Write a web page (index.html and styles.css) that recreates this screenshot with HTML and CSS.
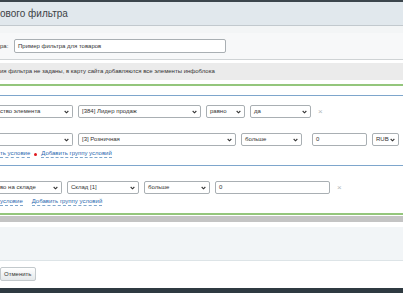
FILE: index.html
```html
<!DOCTYPE html>
<html lang="ru">
<head>
  <meta charset="UTF-8" />
  <title>Добавление нового фильтра</title>
  <link rel="stylesheet" href="styles.css">
</head>
<body>
  <div class="topbar"></div>

  <!-- Заголовок окна -->
  <div class="dlg-title">ового фильтра</div>

  <div class="form-area">
    <div class="form-row">
      <span class="form-label">ра:</span>
      <div class="field field-name">Пример фильтра для товаров</div>
    </div>
  </div>

  <div class="note">ия фильтра не заданы, в карту сайта добавляются все элементы инфоблока</div>

  <!-- Дерево условий -->
  <div class="cond-tree">
    <div class="cond-group first">
      <div class="cond-row">
        <div class="sel cut w-prop">ство элемента<svg class="chev" viewBox="0 0 6 4"><path d="M0.8 0.8 L3 3 L5.2 0.8"/></svg></div>
        <div class="sel w-val">[384] Лидер продаж<svg class="chev" viewBox="0 0 6 4"><path d="M0.8 0.8 L3 3 L5.2 0.8"/></svg></div>
        <div class="sel w-eq">равно<svg class="chev" viewBox="0 0 6 4"><path d="M0.8 0.8 L3 3 L5.2 0.8"/></svg></div>
        <div class="sel w-yes">да<svg class="chev" viewBox="0 0 6 4"><path d="M0.8 0.8 L3 3 L5.2 0.8"/></svg></div>
        <span class="del">&times;</span>
      </div>
      <div class="cond-row row-2">
        <div class="sel cut w-prop"><svg class="chev" viewBox="0 0 6 4"><path d="M0.8 0.8 L3 3 L5.2 0.8"/></svg></div>
        <div class="sel w-price">[3] Розничная<svg class="chev" viewBox="0 0 6 4"><path d="M0.8 0.8 L3 3 L5.2 0.8"/></svg></div>
        <div class="sel w-more">больше<svg class="chev" viewBox="0 0 6 4"><path d="M0.8 0.8 L3 3 L5.2 0.8"/></svg></div>
        <div class="field w-num">0</div>
        <div class="sel w-cur">RUB<svg class="chev" viewBox="0 0 6 4"><path d="M0.8 0.8 L3 3 L5.2 0.8"/></svg></div>
      </div>
      <div class="cond-links">
        <a href="#" class="link">ть условие</a>
        <span class="dot"></span>
        <a href="#" class="link">Добавить группу условий</a>
      </div>
    </div>

    <div class="cond-group second">
      <div class="cond-row">
        <div class="sel cut w-qty">во на складе<svg class="chev" viewBox="0 0 6 4"><path d="M0.8 0.8 L3 3 L5.2 0.8"/></svg></div>
        <div class="sel w-store">Склад [1]<svg class="chev" viewBox="0 0 6 4"><path d="M0.8 0.8 L3 3 L5.2 0.8"/></svg></div>
        <div class="sel w-more2">больше<svg class="chev" viewBox="0 0 6 4"><path d="M0.8 0.8 L3 3 L5.2 0.8"/></svg></div>
        <div class="field w-num2">0</div>
        <span class="del">&times;</span>
      </div>
      <div class="cond-links links-2">
        <a href="#" class="link">условие</a>
        <a href="#" class="link">Добавить группу условий</a>
      </div>
    </div>
  </div>

  <div class="scrollbar"></div>
  <div class="dlg-footer-area"></div>

  <div class="buttons">
    <button class="btn">Отменить</button>
  </div>

  <div class="bottombar"></div>
</body>
</html>
```

FILE: styles.css
```css
/* Общие */
* {
  margin: 0;
  padding: 0;
  box-sizing: border-box;
}
body {
  width: 403px;
  height: 294px;
  overflow: hidden;
  background: #fff;
  font-family: "Liberation Sans", Arial, sans-serif;
  font-size: 6px;
  color: #333;
}

.topbar {
  height: 2px;
  background: #3c464d;
}

/* Заголовок */
.dlg-title {
  height: 24px;
  background: #e1e8ed;
  border-bottom: 1px solid #c2c9ce;
  font-size: 10px;
  line-height: 23px;
  color: #3d4347;
}

/* Название фильтра */
.form-area {
  height: 34px;
  background: #f7f8f9;
  border-top: 7px solid #f3f5f6;
  border-bottom: 1px solid #cfd3d5;
  display: flex;
  align-items: center;
}
.form-row {
  display: flex;
  align-items: center;
  gap: 4px;
  margin-top: -1px;
}
.form-label {
  width: 10px;
}
.field {
  height: 14px;
  border: 1px solid #a9afb3;
  border-radius: 2px;
  background: #fff;
  padding-left: 3px;
  line-height: 12px;
  white-space: nowrap;
}
.field-name {
  width: 212px;
}

.note {
  margin-top: 3px;
  height: 17px;
  background: #ebebeb;
  line-height: 17px;
  white-space: nowrap;
}

/* Дерево условий */
.cond-tree {
  margin-top: 4px;
  border-top: 2px solid #94c67c;
  border-bottom: 2px solid #94c67c;
  padding-top: 9px;
}
.cond-group.first {
  border-top: 1px solid #7ea6cc;
  border-bottom: 1px solid #7ea6cc;
  padding: 9px 0 6px;
}
.cond-group.second {
  padding: 15px 0 6px;
}
.cond-row {
  display: flex;
  align-items: center;
  gap: 5px;
  height: 13px;
}
.row-2 {
  margin-top: 15px;
}
.sel {
  position: relative;
  height: 13px;
  border: 1px solid #a9afb3;
  border-radius: 2px;
  background: #fff;
  padding-left: 3px;
  line-height: 11px;
  white-space: nowrap;
  overflow: hidden;
}
/* левый край обрезан окном */
.sel.cut {
  border-left: none;
  border-radius: 0 2px 2px 0;
  padding-left: 0;
}
.chev {
  position: absolute;
  right: 3px;
  top: 4px;
  width: 5px;
  height: 4px;
  fill: none;
  stroke: #333;
  stroke-width: 1.3;
}
.w-prop  { width: 73px; }
.w-val   { width: 123px; }
.w-eq    { width: 39px; }
.w-yes   { width: 61px; }
.w-price { width: 158px; }
.w-more  { width: 61px; }
.w-num   { width: 55px; height: 13px; margin-left: 5px; line-height: 11px; }
.w-cur   { width: 27px; }
.w-qty   { width: 62px; }
.w-store { width: 72px; }
.w-more2 { width: 66px; }
.w-num2  { width: 115px; height: 13px; line-height: 11px; }

.del {
  margin-left: 2px;
  color: #b4b8bb;
  font-size: 8px;
}

.cond-links {
  margin-top: 3px;
  height: 10px;
  display: flex;
  align-items: center;
  gap: 4px;
}
.links-2 {
  gap: 9px;
}
.link {
  color: #2a69b0;
  text-decoration: none;
  border-bottom: 1px dashed #7ea6cc;
  line-height: 7px;
}
.dot {
  width: 3px;
  height: 3px;
  border-radius: 50%;
  background: #e0191f;
}

.scrollbar {
  margin-top: 1px;
  height: 6px;
  background: #c4c4c4;
}
.dlg-footer-area {
  margin-top: 5px;
  height: 34px;
  background: #f2f5f7;
  border-bottom: 1px solid #dde4e7;
}

/* Кнопки */
.buttons {
  padding: 6px 0 0;
  height: 27px;
}
.btn {
  height: 14px;
  width: 36px;
  border: 1px solid #c3c9cc;
  border-radius: 2px;
  background: linear-gradient(#fff, #e4e8ea);
  font-family: "Liberation Sans", Arial, sans-serif;
  font-size: 6px;
  color: #333;
  text-align: left;
  padding-left: 3px;
}

.bottombar {
  height: 5px;
  background: #2f3a41;
}
```
